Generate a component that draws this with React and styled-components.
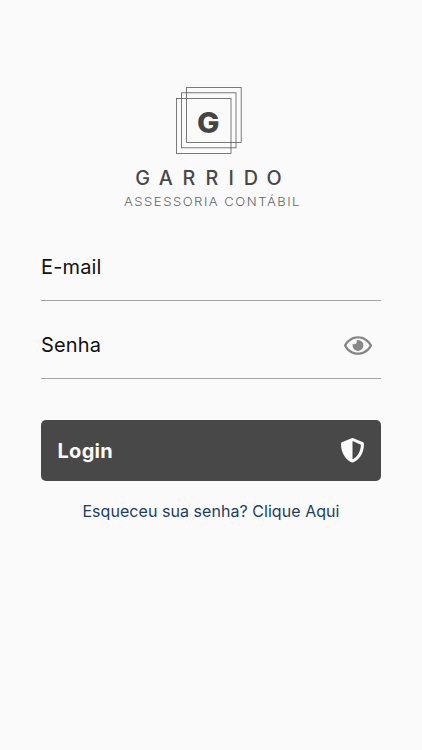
import React, { useState } from 'react'
import styled, { createGlobalStyle } from 'styled-components'
import { FaRegEye, FaShieldAlt } from 'react-icons/fa'

const GlobalStyle = createGlobalStyle`
    * {
        box-sizing: border-box;
    }

    body {
        margin: 0;
        background-color: #fafafa;
        font-family: 'Inter', 'Liberation Sans', sans-serif;
    }
`

const Container = styled.main`
    width: 100%;
    min-height: 100vh;
    padding: 80px 41px 0;
    display: flex;
    flex-direction: column;
    align-items: center;
    background-color: #fafafa;
`

const LogoImage = styled.svg`
    display: block;
    width: 200px;
    height: 142px;

    rect {
        fill: none;
        stroke: #5a5a5a;
        stroke-width: 0.8;
    }
`

const Form = styled.form`
    width: 100%;
    display: flex;
    flex-direction: column;
`

const Field = styled.div`
    height: 79px;
    padding-top: 12px;
    display: flex;
    align-items: center;
    border-bottom: 1px solid #a3a3a3;

    & + & {
        height: 78px;
        padding-top: 11px;
    }
`

const Input = styled.input`
    flex: 1;
    min-width: 0;
    padding: 0;
    border: none;
    outline: none;
    background: none;
    font-family: inherit;
    font-size: 20px;
    line-height: 24px;
    letter-spacing: 0.15px;
    color: #111;

    &::placeholder {
        color: #111;
        opacity: 1;
    }
`

const EyeButton = styled.button`
    margin: 0 9px 0 0;
    padding: 0;
    display: flex;
    border: none;
    background: none;
    color: #868686;

    svg {
        width: 28px;
        height: 25px;
    }
`

const Button = styled.button`
    height: 61px;
    margin-top: 41px;
    padding: 0 16px 0 16.5px;
    display: flex;
    align-items: center;
    justify-content: space-between;
    border: none;
    border-radius: 5px;
    background-color: #484848;
    color: #fafafa;
    font-family: inherit;
    font-size: 20px;
    font-weight: 700;
    letter-spacing: 0.3px;

    svg {
        width: 25px;
        height: 24.5px;
    }
`

const Forgot = styled.a`
    margin-top: 20px;
    font-size: 16px;
    line-height: 20px;
    letter-spacing: 0.05px;
    white-space: nowrap;
    text-decoration: none;
    color: #1d3d63;
`

function Logo() {
    return (
        <LogoImage viewBox="111 80 200 142" role="img" aria-label="Garrido Assessoria Contábil">
            <rect x="186.6" y="87.5" width="54.6" height="55" />
            <rect x="181.4" y="92.8" width="54.6" height="55" />
            <rect x="176.4" y="98.5" width="54.6" height="55" />
            <text x="197" y="132.5" fontSize="29" fontWeight="800" textLength="22.5" lengthAdjust="spacingAndGlyphs" fill="#444">G</text>
            <text x="135.3 158.7 182.6 205.4 228.6 243.7 266.6" y="184.5" fontSize="19.8" fontWeight="500" fill="#484848">GARRIDO</text>
            <text x="124" y="206.3" fontSize="12.3" fontWeight="300" letterSpacing="1.4" textLength="177" lengthAdjust="spacingAndGlyphs" fill="#666">ASSESSORIA CONTÁBIL</text>
        </LogoImage>
    )
}

function App() {
    const [showPassword, setShowPassword] = useState(false)

    return (
        <>
            <GlobalStyle />
            <Container>
                <Logo />

                <Form onSubmit={(e) => e.preventDefault()}>
                    <Field>
                        <Input type="email" placeholder="E-mail" />
                    </Field>

                    <Field>
                        <Input type={showPassword ? 'text' : 'password'} placeholder="Senha" />
                        <EyeButton type="button" aria-label="Mostrar senha" onClick={() => setShowPassword(!showPassword)}>
                            <FaRegEye />
                        </EyeButton>
                    </Field>

                    <Button type="submit">
                        Login
                        <FaShieldAlt />
                    </Button>
                </Form>

                <Forgot href="#">Esqueceu sua senha? Clique Aqui</Forgot>
            </Container>
        </>
    )
}

export default App
